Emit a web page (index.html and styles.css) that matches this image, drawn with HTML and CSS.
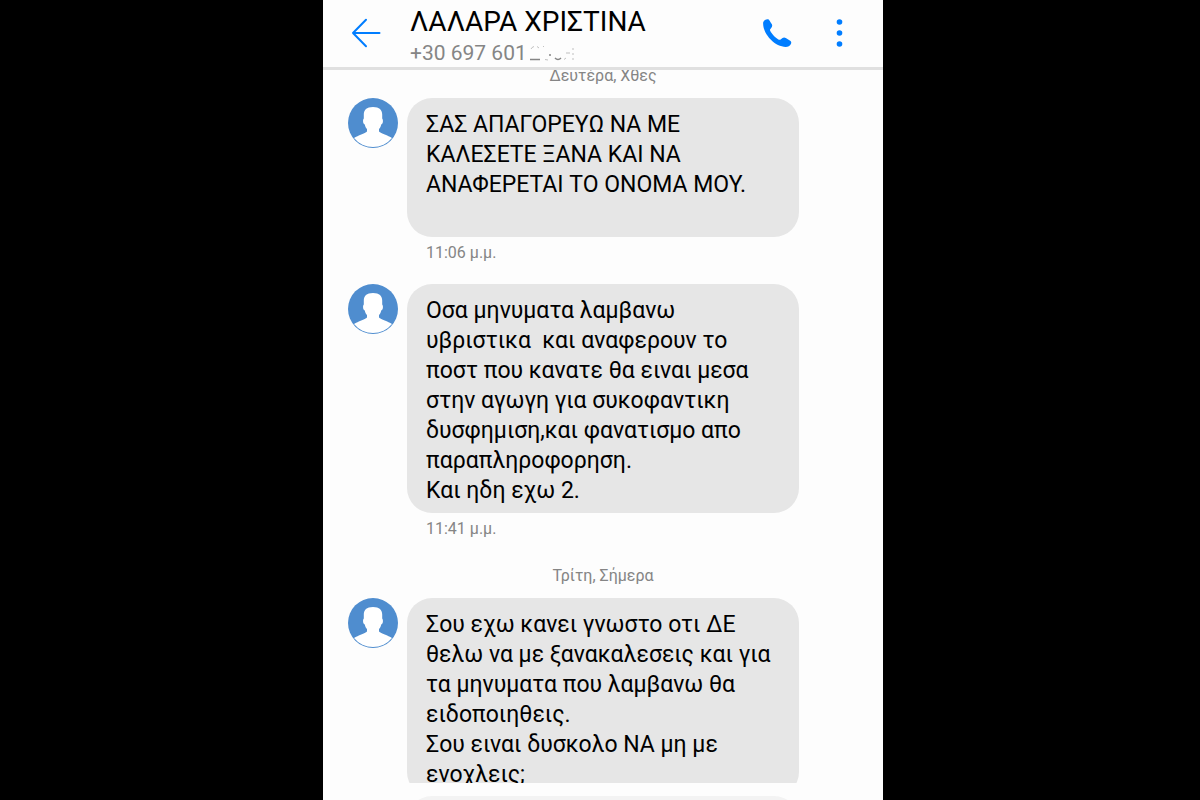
FILE: index.html
```
<!DOCTYPE html>
<html lang="el">
<head>
    <meta charset="UTF-8">
    <meta name="viewport" content="width=device-width, initial-scale=1.0">
    <title>Μηνύματα</title>
    <link rel="stylesheet" href="styles.css">
</head>
<body>
    <svg class="defs" width="0" height="0" aria-hidden="true">
        <symbol id="avatar" viewBox="0 0 50 50">
            <circle cx="25" cy="25" r="25" fill="#4f8dcf"/>
            <path d="M25 9C18.500 9 15.800 12 15.800 16.500V20.500C14.600 21.500 14.800 26 16.800 26.500C17.200 28.500 18 30 19 31V33.500C17 35.500 10 37.500 6 40A24.400 24.400 0 0 0 44 40C40 37.500 33 35.500 31 33.500V31C32 30 32.800 28.500 33.200 26.500C35.200 26 35.400 21.500 34.200 20.500V16.500C34.200 12 31.500 9 25 9Z" fill="#fff"/>
        </symbol>
    </svg>

    <main class="phone">
        <header class="topbar">
            <button type="button" class="icon-btn back" aria-label="Πίσω">
                <svg width="30" height="30" viewBox="0 0 30 30" fill="none" stroke="#007dff" stroke-width="2" stroke-linecap="round" stroke-linejoin="round">
                    <path d="M28.500 15H2M15 1.800L2 15L15 28.200"/>
                </svg>
            </button>
            <div class="contact">
                <h1>ΛΑΛΑΡΑ ΧΡΙΣΤΙΝΑ</h1>
                <p>
                    +30 697 601
                    <svg class="erased" width="48" height="18" viewBox="0 0 48 18" fill="none" stroke="#858585" stroke-width="1" aria-hidden="true">
                        <path d="M0 15.500H10" stroke-width="1.500"/>
                        <path d="M1 5Q2 3 4 2.500M7 2.500L9 4M13 3L14 2M15 15.500L18 16M34 15.500L36 14M36 9H40M43 4V6M43 9V11M43 14V16" opacity=".5"/>
                        <path d="M19 11H21M25 14Q28 17 31 14" stroke-width="1.500"/>
                    </svg>
                </p>
            </div>
            <button type="button" class="icon-btn call" aria-label="Κλήση">
                <svg width="30" height="30" viewBox="0 0 30 30" fill="#007dff">
                    <path d="M.2 4.300C1 2 3.200 .9 5.200 1.200C6 1.400 7.500 4.200 8.900 6.300C9.500 7.500 9.200 9 8.200 10L7.200 11.200C6.700 12 7.200 13 8 14.200C10 17.200 12.200 19.300 15 21.200C16.100 22 16.900 22.100 17.600 21.400L19.500 20C20.500 19.200 21.700 19.200 22.800 19.900L27.200 22.800C28.400 23.700 28.500 24.700 27.900 26C27 27.900 25 29 22.700 29C17.700 28.700 12.200 26.500 7.700 21.600C3.200 17 -.5 10 .2 4.300Z"/>
                </svg>
            </button>
            <button type="button" class="icon-btn menu" aria-label="Περισσότερα">
                <svg width="30" height="30" viewBox="0 0 30 30" fill="#007dff">
                    <circle cx="14.500" cy="4" r="2.800"/>
                    <circle cx="14.500" cy="15" r="2.800"/>
                    <circle cx="14.500" cy="26" r="2.800"/>
                </svg>
            </button>
        </header>

        <section class="messages">
            <div class="list">
                <p class="date">Δευτέρα, Χθες</p>

                <article class="message">
                    <svg class="avatar"><use href="#avatar"/></svg>
                    <div class="content">
                        <div class="bubble">ΣΑΣ ΑΠΑΓΟΡΕΥΩ ΝΑ ΜΕ
ΚΑΛΕΣΕΤΕ ΞΑΝΑ ΚΑΙ ΝΑ
ΑΝΑΦΕΡΕΤΑΙ ΤΟ ΟΝΟΜΑ ΜΟΥ.<br><br></div>
                        <time>11:06 μ.μ.</time>
                    </div>
                </article>

                <article class="message">
                    <svg class="avatar"><use href="#avatar"/></svg>
                    <div class="content">
                        <div class="bubble">Οσα μηνυματα λαμβανω
υβριστικα  και αναφερουν το
ποστ που κανατε θα ειναι μεσα
στην αγωγη για συκοφαντικη
δυσφημιση,και φανατισμο απο
παραπληροφορηση.
Και ηδη εχω 2.</div>
                        <time>11:41 μ.μ.</time>
                    </div>
                </article>

                <p class="date">Τρίτη, Σήμερα</p>

                <article class="message">
                    <svg class="avatar"><use href="#avatar"/></svg>
                    <div class="content">
                        <div class="bubble">Σου εχω κανει γνωστο οτι ΔΕ
θελω να με ξανακαλεσεις και για
τα μηνυματα που λαμβανω θα
ειδοποιηθεις.
Σου ειναι δυσκολο ΝΑ μη με
ενοχλεις;</div>
                    </div>
                </article>
            </div>
        </section>

        <footer class="composer">
            <input type="text" aria-label="Μήνυμα">
        </footer>
    </main>
</body>
</html>
```

FILE: styles.css
```
* {
    box-sizing: border-box;
}

body {
    margin: 0;
    padding-left: 6px;
    height: 100vh;
    overflow: hidden;
    display: flex;
    justify-content: center;
    background-color: #000;
    font-family: Roboto, "Noto Sans", sans-serif;
}

h1, p {
    margin: 0;
    font-weight: normal;
}

.defs {
    position: absolute;
}

.phone {
    width: 100%;
    max-width: 560px;
    height: 100%;
    display: flex;
    flex-direction: column;
    background-color: #fdfdfd;
    color: #000;
}

/* header */
.topbar {
    flex: none;
    display: flex;
    align-items: flex-start;
    padding: 4px 28px 0;
    height: 70px;
    border-bottom: 3px solid #e0e0e0;
}

.icon-btn {
    flex: none;
    width: 30px;
    height: 30px;
    margin-top: 14px;
    padding: 0;
    border: none;
    background: none;
    cursor: pointer;
}

.icon-btn svg {
    display: block;
}

.menu {
    margin-left: 32px;
}

.contact {
    flex: 1;
    margin-left: 29px;
}

.contact h1 {
    font-size: 28px;
    line-height: 36px;
}

.contact p {
    display: flex;
    align-items: center;
    gap: 3px;
    font-size: 21px;
    line-height: 26px;
    color: #858585;
}

/* messages */
.messages {
    flex: 1;
    min-height: 0;
    overflow: hidden;
}

.list {
    margin-top: -10px;
    padding: 0 84px 0 25px;
}

/* left padding keeps the date centred on the whole screen */
.date {
    padding: 6px 0 12px 59px;
    font-size: 16px;
    line-height: 20px;
    text-align: center;
    color: #858585;
}

.message {
    display: flex;
    gap: 9px;
}

.avatar {
    flex: none;
    width: 50px;
    height: 50px;
}

.content {
    flex: 1;
}

.bubble {
    padding: 12px 19px 7px;
    border-radius: 25px;
    background-color: #e6e6e6;
    font-size: 23px;
    line-height: 30px;
    white-space: pre-wrap;
}

time {
    display: block;
    margin: 6px 19px 21px;
    font-size: 16px;
    line-height: 20px;
    color: #858585;
}

/* message box, only its top edge is on the screen */
.composer {
    flex: none;
    height: 17px;
    padding: 13px 84px 0;
    overflow: hidden;
}

.composer input {
    display: block;
    width: 100%;
    height: 50px;
    padding: 0 19px;
    border: none;
    border-radius: 25px;
    background-color: #f3f3f3;
    font: inherit;
    font-size: 23px;
}
```
